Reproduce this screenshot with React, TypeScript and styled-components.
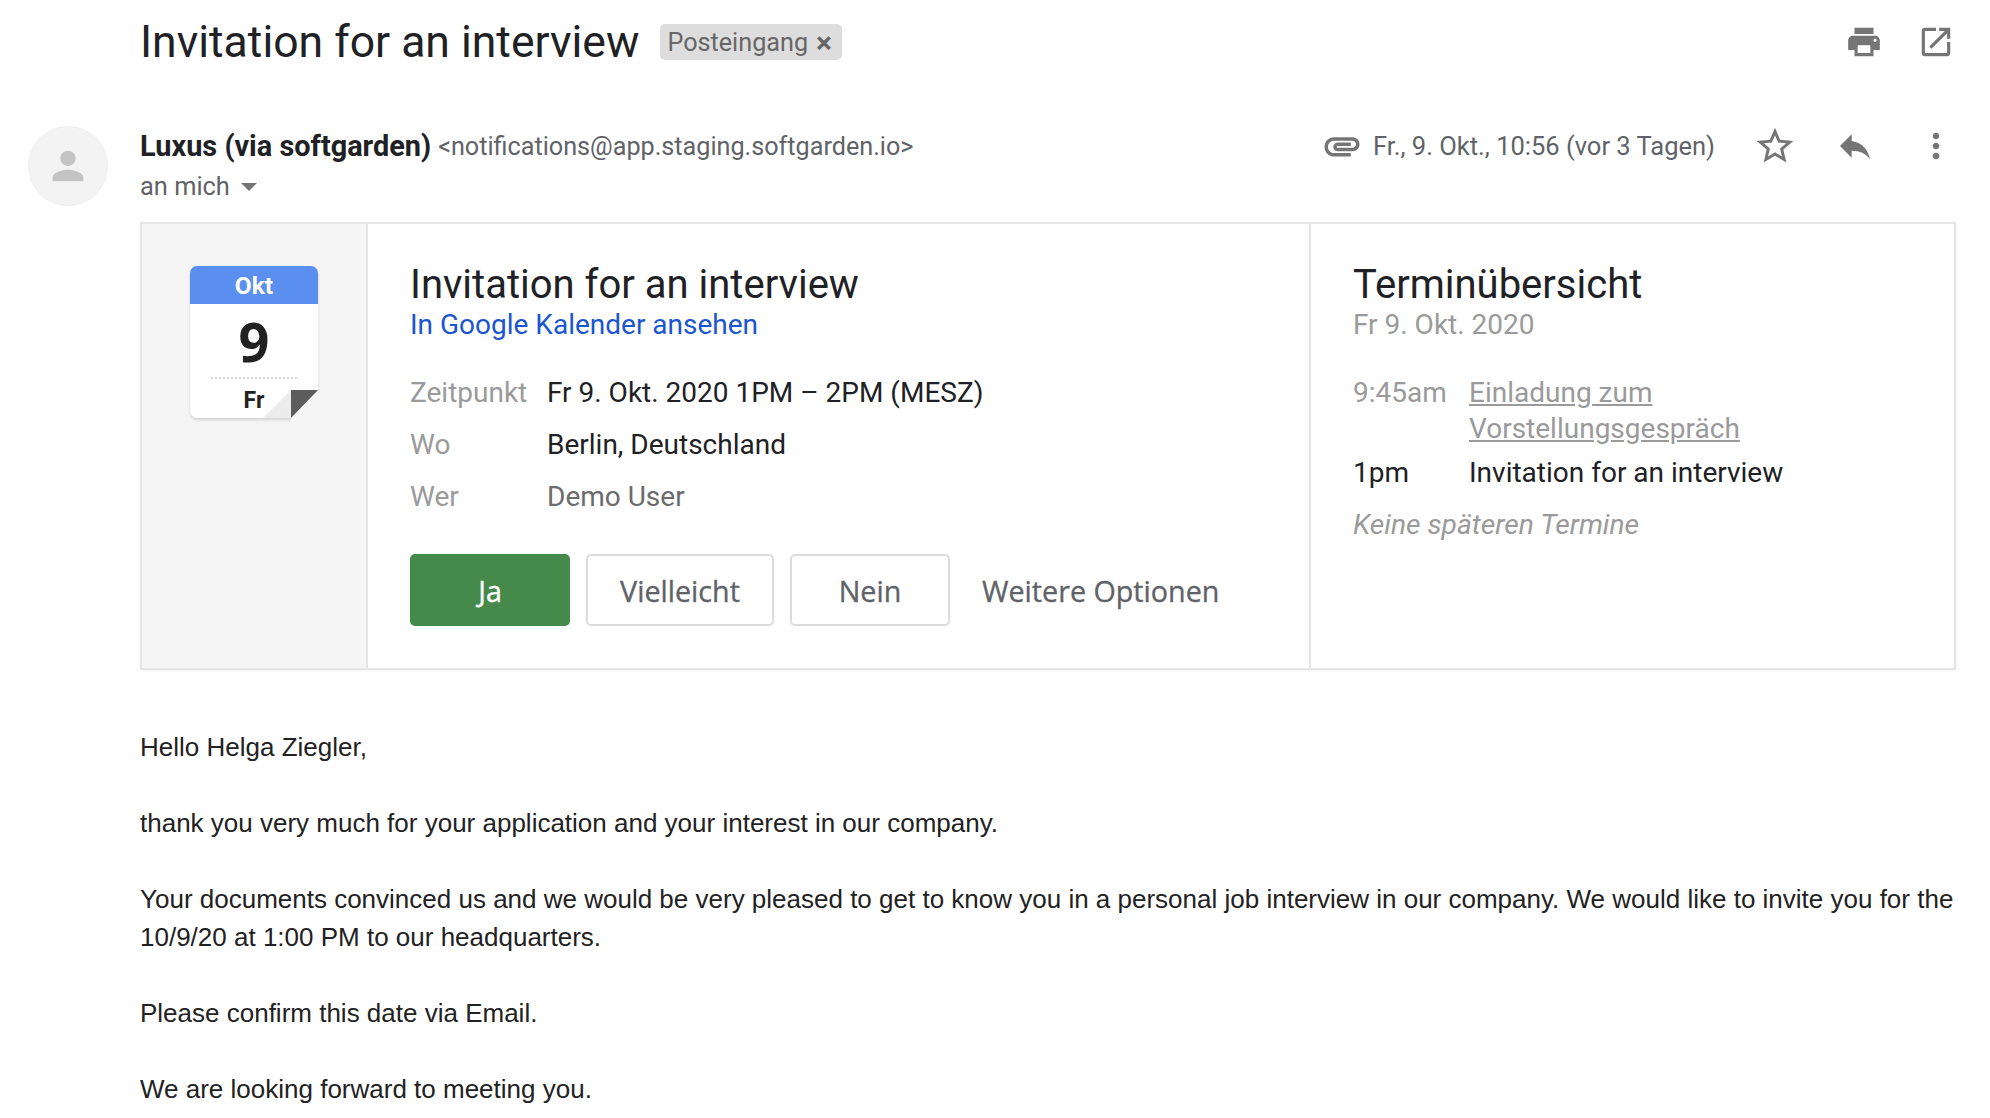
import React from "react";
import styled, { createGlobalStyle } from "styled-components";
import {
  MdPrint,
  MdOpenInNew,
  MdAttachment,
  MdStarBorder,
  MdReply,
  MdMoreVert,
  MdPerson,
} from "react-icons/md";

const GlobalStyle = createGlobalStyle`
  html, body {
    margin: 0;
    padding: 0;
    background: #fff;
    overflow: hidden;
  }
  body {
    font-family: Roboto, "Liberation Sans", sans-serif;
    color: #202124;
  }
`;

const Page = styled.div`
  width: 1990px;
  height: 1118px;
  overflow: hidden;
  display: grid;
  grid-template-columns: 112px 1816px;
  padding-left: 28px;
  box-sizing: border-box;
`;

const AvatarColumn = styled.div`
  padding-top: 126px;
`;

const Avatar = styled.div`
  width: 80px;
  height: 80px;
  border-radius: 50%;
  background: #f3f3f3;
  border: 1px solid #eee;
  box-sizing: border-box;
  display: flex;
  align-items: center;
  justify-content: center;
  color: #c4c4c4;
  font-size: 46px;
`;

const Main = styled.div`
  display: flex;
  flex-direction: column;
`;

const TitleRow = styled.div`
  height: 84px;
  display: flex;
  align-items: center;
`;

const Subject = styled.h1`
  margin: 0;
  font-size: 44.5px;
  font-weight: 400;
  color: #202124;
`;

const Chip = styled.span`
  margin-left: 21px;
  height: 36px;
  padding: 0 10px 0 7px;
  border-radius: 5px;
  background: #dddddd;
  color: #666;
  font-size: 25.2px;
  display: flex;
  align-items: center;
  gap: 8px;
`;

const ChipClose = styled.b`
  font-size: 30px;
  color: #666;
`;

const RowIcons = styled.div`
  margin-left: auto;
  display: flex;
  align-items: center;
  color: #757575;
  font-size: 38px;
  gap: 34px;
  padding-right: 1px;
`;

const SenderRow = styled.div`
  margin-top: 32px;
  height: 60px;
  display: flex;
  align-items: center;
  justify-content: space-between;
`;

const SenderInfo = styled.div`
  display: flex;
  align-items: baseline;
  gap: 7px;
`;

const SenderName = styled.span`
  font-size: 28.9px;
  font-weight: 700;
  color: #202124;
`;

const SenderMail = styled.span`
  font-size: 25.2px;
  color: #5f6368;
  position: relative;
  top: -1px;
`;

const Meta = styled.div`
  display: flex;
  align-items: center;
  color: #5f6368;
  font-size: 25.5px;
`;

const Clip = styled.span`
  font-size: 42px;
  line-height: 0;
  color: #757575;
  margin-right: 10px;
  display: flex;
`;

const ActionIcon = styled.span<{ $left: number; $size: number }>`
  margin-left: ${(p) => p.$left}px;
  font-size: ${(p) => p.$size}px;
  line-height: 0;
  color: #757575;
  display: flex;
`;

const ToLine = styled.div`
  margin-top: -10px;
  height: 40px;
  display: flex;
  align-items: center;
  gap: 11px;
  font-size: 25.4px;
  color: #5f6368;
`;

const Caret = styled.span`
  width: 0;
  height: 0;
  border-left: 8px solid transparent;
  border-right: 8px solid transparent;
  border-top: 8px solid #757575;
  margin-top: 2px;
`;

const Card = styled.div`
  margin-top: 16px;
  width: 1816px;
  height: 448px;
  box-sizing: border-box;
  border: 2px solid #e5e5e5;
  box-shadow: 0 1px 3px rgba(0, 0, 0, 0.06);
  display: grid;
  grid-template-columns: 226px 943px 1fr;
`;

const DateColumn = styled.div`
  background: #f5f5f5;
  border-right: 2px solid #e5e5e5;
  padding: 42px 0 0 48px;
`;

const Calendar = styled.div`
  position: relative;
  width: 128px;
  height: 152px;
  border-radius: 7px;
  background: #fff;
  box-shadow: 0 2px 3px rgba(0, 0, 0, 0.14);
  display: flex;
  flex-direction: column;
  align-items: center;
`;

const CalMonth = styled.div`
  width: 100%;
  height: 38px;
  border-radius: 7px 7px 0 0;
  background: #5a8ff0;
  color: #fff;
  font-size: 24.5px;
  font-weight: 700;
  display: flex;
  align-items: center;
  justify-content: center;
`;

const CalDay = styled.div`
  height: 73px;
  width: 86px;
  font-size: 54px;
  font-weight: 700;
  color: #212121;
  font-family: "Open Sans", Roboto, sans-serif;
  border-bottom: 2px dotted #d8d8d8;
  display: flex;
  align-items: center;
  justify-content: center;
`;

const CalWeekday = styled.div`
  margin-top: 8px;
  font-size: 23px;
  font-weight: 700;
  color: #212121;
`;

const CalFold = styled.svg`
  position: absolute;
  right: -5px;
  bottom: -5px;
`;

const MiddleColumn = styled.div`
  padding: 37px 0 0 42px;
  border-right: 2px solid #e5e5e5;
`;

const RightColumn = styled.div`
  padding: 37px 0 0 42px;
`;

const CardTitle = styled.div`
  font-size: 40px;
  line-height: 48px;
  color: #202124;
`;

const CalLink = styled.a`
  display: block;
  font-size: 28px;
  line-height: 32px;
  color: #1a56d0;
`;

const SubDate = styled.div`
  font-size: 28px;
  line-height: 32px;
  color: #9a9a9a;
`;

const Details = styled.div`
  margin-top: 25px;
  display: grid;
  grid-template-columns: 137px 1fr;
  grid-auto-rows: 52px;
  align-items: center;
  font-size: 28px;
`;

const DetailLabel = styled.div`
  color: #9a9a9a;
`;

const DetailValue = styled.div<{ $muted?: boolean }>`
  color: ${(p) => (p.$muted ? "#6b6b6b" : "#202124")};
`;

const Buttons = styled.div`
  margin-top: 32px;
  display: flex;
  gap: 16px;
  align-items: center;
`;

const Rsvp = styled.button<{ $primary?: boolean; $w: number }>`
  width: ${(p) => p.$w}px;
  height: 72px;
  border-radius: 5px;
  border: 2px solid ${(p) => (p.$primary ? "#468a4b" : "#dadce0")};
  background: ${(p) => (p.$primary ? "#468a4b" : "#fff")};
  color: ${(p) => (p.$primary ? "#fff" : "#5f6368")};
  font-family: "Open Sans", Roboto, sans-serif;
  font-size: 28.7px;
  -webkit-text-stroke: 0.35px currentColor;
  padding: 0;
`;

const MoreOptions = styled.span`
  margin-left: 16px;
  font-family: "Open Sans", Roboto, sans-serif;
  font-size: 28.7px;
  -webkit-text-stroke: 0.35px currentColor;
  color: #5f6368;
  white-space: nowrap;
`;

const Agenda = styled.div`
  margin-top: 34px;
  display: grid;
  grid-template-columns: 116px 1fr;
  font-size: 28px;
  line-height: 36px;
  row-gap: 8px;
  align-items: start;
`;

const AgendaTime = styled.div<{ $past?: boolean }>`
  color: ${(p) => (p.$past ? "#9a9a9a" : "#202124")};
`;

const AgendaEvent = styled.div<{ $past?: boolean }>`
  color: ${(p) => (p.$past ? "#9a9a9a" : "#202124")};
  text-decoration: ${(p) => (p.$past ? "underline" : "none")};
`;

const NoLater = styled.div`
  margin-top: 16px;
  font-size: 28.2px;
  line-height: 36px;
  font-style: italic;
  color: #9a9a9a;
`;

const Body = styled.div`
  margin-top: 58px;
  font-family: "Liberation Sans", Arial, sans-serif;
  font-size: 26px;
  line-height: 38px;
  color: #222;
  white-space: nowrap;
`;

const Paragraph = styled.p`
  margin: 0 0 38px;
`;

export default function App() {
  return (
    <>
      <GlobalStyle />
      <Page>
        <AvatarColumn>
          <Avatar>
            <MdPerson />
          </Avatar>
        </AvatarColumn>
        <Main>
          <TitleRow>
            <Subject>Invitation for an interview</Subject>
            <Chip>
              Posteingang <ChipClose>×</ChipClose>
            </Chip>
            <RowIcons>
              <MdPrint />
              <MdOpenInNew />
            </RowIcons>
          </TitleRow>
          <SenderRow>
            <SenderInfo>
              <SenderName>Luxus (via softgarden)</SenderName>
              <SenderMail>&lt;notifications@app.staging.softgarden.io&gt;</SenderMail>
            </SenderInfo>
            <Meta>
              <Clip>
                <MdAttachment />
              </Clip>
              <span>Fr., 9. Okt., 10:56 (vor 3 Tagen)</span>
              <ActionIcon $left={38} $size={44}>
                <MdStarBorder />
              </ActionIcon>
              <ActionIcon $left={38} $size={40}>
                <MdReply />
              </ActionIcon>
              <ActionIcon $left={41} $size={40}>
                <MdMoreVert />
              </ActionIcon>
            </Meta>
          </SenderRow>
          <ToLine>
            an mich <Caret />
          </ToLine>
          <Card>
            <DateColumn>
              <Calendar>
                <CalMonth>Okt</CalMonth>
                <CalDay>9</CalDay>
                <CalWeekday>Fr</CalWeekday>
                <CalFold width="60" height="33" viewBox="0 0 60 33">
                  <polygon points="28,0 60,0 60,33 28,33" fill="#f5f5f5" />
                  <polygon points="0,28 28,0 28,28" fill="#ececec" />
                  <polygon points="28,0 55,0 28,28" fill="#5c5c5c" />
                </CalFold>
              </Calendar>
            </DateColumn>
            <MiddleColumn>
              <CardTitle>Invitation for an interview</CardTitle>
              <CalLink>In Google Kalender ansehen</CalLink>
              <Details>
                <DetailLabel>Zeitpunkt</DetailLabel>
                <DetailValue>Fr 9. Okt. 2020 1PM – 2PM (MESZ)</DetailValue>
                <DetailLabel>Wo</DetailLabel>
                <DetailValue>Berlin, Deutschland</DetailValue>
                <DetailLabel>Wer</DetailLabel>
                <DetailValue $muted>Demo User</DetailValue>
              </Details>
              <Buttons>
                <Rsvp $primary $w={160}>
                  Ja
                </Rsvp>
                <Rsvp $w={188}>Vielleicht</Rsvp>
                <Rsvp $w={160}>Nein</Rsvp>
                <MoreOptions>Weitere Optionen</MoreOptions>
              </Buttons>
            </MiddleColumn>
            <RightColumn>
              <CardTitle>Terminübersicht</CardTitle>
              <SubDate>Fr 9. Okt. 2020</SubDate>
              <Agenda>
                <AgendaTime $past>9:45am</AgendaTime>
                <AgendaEvent $past>
                  Einladung zum
                  <br />
                  Vorstellungsgespräch
                </AgendaEvent>
                <AgendaTime>1pm</AgendaTime>
                <AgendaEvent>Invitation for an interview</AgendaEvent>
              </Agenda>
              <NoLater>Keine späteren Termine</NoLater>
            </RightColumn>
          </Card>
          <Body>
            <Paragraph>Hello Helga Ziegler,</Paragraph>
            <Paragraph>
              thank you very much for your application and your interest in our company.
            </Paragraph>
            <Paragraph>
              Your documents convinced us and we would be very pleased to get to know you in a
              personal job interview in our company. We would like to invite you for the
              <br />
              10/9/20 at 1:00 PM to our headquarters.
            </Paragraph>
            <Paragraph>Please confirm this date via Email.</Paragraph>
            <Paragraph>We are looking forward to meeting you.</Paragraph>
          </Body>
        </Main>
      </Page>
    </>
  );
}
